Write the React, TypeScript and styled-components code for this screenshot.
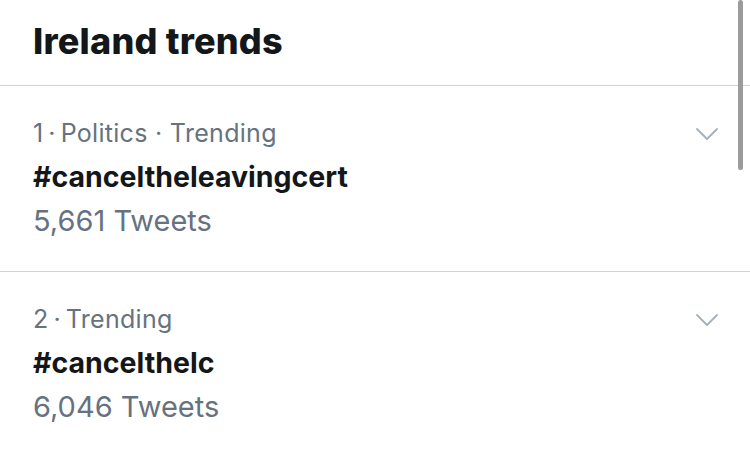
import React from "react";
import styled, { createGlobalStyle } from "styled-components";

const GlobalStyle = createGlobalStyle`
  html, body {
    margin: 0;
    padding: 0;
    background: #ffffff;
  }
  body {
    font-family: Inter, "Noto Sans", "Liberation Sans", sans-serif;
    -webkit-font-smoothing: antialiased;
  }
`;

type Trend = {
  rank: number;
  category?: string;
  name: string;
  tweets: string;
};

const trends: Trend[] = [
  { rank: 1, category: "Politics", name: "#canceltheleavingcert", tweets: "5,661" },
  { rank: 2, name: "#cancelthelc", tweets: "6,046" },
];

const Page = styled.div`
  position: relative;
  width: 750px;
  height: 453px;
  overflow: hidden;
  background: #fff;
`;

const Header = styled.header`
  height: 85px;
  padding: 0 33px;
  display: flex;
  align-items: center;
  border-bottom: 1px solid #d3d3d6;
`;

const Title = styled.h1`
  margin: 0;
  font-size: 36px;
  font-weight: 800;
  color: #14171a;
  letter-spacing: 0.2px;
  line-height: 44px;
  padding-bottom: 4px;
`;

const Row = styled.div`
  display: flex;
  align-items: flex-start;
  justify-content: space-between;
  padding: 25px 32px 28px 33px;
  border-bottom: 1px solid #d3d3d6;
`;

const Info = styled.div`
  display: flex;
  flex-direction: column;
`;

const Meta = styled.div`
  line-height: 44px;
  font-size: 25px;
  letter-spacing: 0.3px;
  color: #66727f;
`;

const Name = styled.div`
  line-height: 44px;
  font-size: 28.5px;
  font-weight: 700;
  color: #14171a;
`;

const Count = styled.div`
  line-height: 44px;
  font-size: 29px;
  color: #66727f;
`;

const Chevron = styled.button`
  border: 0;
  background: none;
  padding: 0;
  margin-top: 17px;
  width: 22px;
  height: 12px;
  display: flex;
  cursor: pointer;
`;

const Scrollbar = styled.div`
  position: absolute;
  top: 0;
  right: 7px;
  width: 5px;
  height: 170px;
  border-radius: 3px;
  background: #9b9b9b;
`;

function TrendRow({ trend }: { trend: Trend }) {
  const rest = [trend.category, "Trending"].filter(Boolean).join(" · ");
  return (
    <Row>
      <Info>
        <Meta>
          {trend.rank}
          {"\u2009·\u2009"}
          {rest}
        </Meta>
        <Name>{trend.name}</Name>
        <Count>{trend.tweets} Tweets</Count>
      </Info>
      <Chevron aria-label="More">
        <svg width="22" height="12" viewBox="0 0 22 12" fill="none">
          <path
            d="M1 1l10 10L21 1"
            stroke="#a5b0bc"
            strokeWidth="1.8"
            strokeLinecap="round"
            strokeLinejoin="round"
          />
        </svg>
      </Chevron>
    </Row>
  );
}

export default function App() {
  return (
    <>
      <GlobalStyle />
      <Page>
        <Header>
          <Title>Ireland trends</Title>
        </Header>
        {trends.map((t) => (
          <TrendRow key={t.rank} trend={t} />
        ))}
        <Scrollbar />
      </Page>
    </>
  );
}
